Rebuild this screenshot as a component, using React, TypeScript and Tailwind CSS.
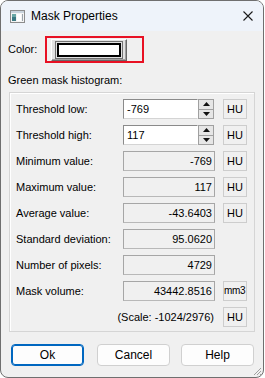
import React from "react";

const font = { fontFamily: '"Liberation Sans", Arial, sans-serif' };

const Spinner: React.FC = () => (
  <div className="flex h-[20px] w-[16px] flex-col border border-[#a0a0a0] bg-[#e6e6e6]">
    <div className="flex flex-1 items-center justify-center border-b border-[#a0a0a0]">
      <svg width="7" height="4" viewBox="0 0 7 4">
        <path d="M3.5 0 L7 4 L0 4 Z" fill="#111" />
      </svg>
    </div>
    <div className="flex flex-1 items-center justify-center">
      <svg width="7" height="4" viewBox="0 0 7 4">
        <path d="M0 0 L7 0 L3.5 4 Z" fill="#111" />
      </svg>
    </div>
  </div>
);

const Unit: React.FC<{ text: string; tight?: boolean }> = ({ text, tight }) => (
  <div
    className={`ml-[8px] flex h-[20px] w-[24px] items-center overflow-visible whitespace-nowrap border border-[#cdcdcd] bg-[#f0f0f0] leading-none text-black ${
      tight ? "pl-0 text-[10px] tracking-[-0.3px]" : "pl-[3px] text-[11px]"
    }`}
  >
    {text}
  </div>
);

const ValueBox: React.FC<{ value: string }> = ({ value }) => (
  <div className="flex h-[20px] w-[92px] items-center justify-end border border-[#a6a6a6] border-b-[#b8b8b8] bg-[#f0f0f0] pr-[2px] text-[11px] text-black">
    {value}
  </div>
);

const SpinInput: React.FC<{ value: string }> = ({ value }) => (
  <div className="flex w-[92px]">
    <div className="flex h-[20px] w-[75px] items-center border border-[#8a8a8a] border-b-[#d4d4d4] border-r-white bg-white pl-[3px] text-[11px] text-black">
      {value}
    </div>
    <Spinner />
  </div>
);

const Row: React.FC<{ label: string; children: React.ReactNode; unit?: string }> = ({ label, children, unit }) => (
  <div className="flex h-[20px] items-center">
    <div className="w-[107px] text-[11px] text-black">{label}</div>
    {children}
    {unit && <Unit text={unit} tight={unit === "mm3"} />}
  </div>
);

const Btn: React.FC<{ label: string; primary?: boolean }> = ({ label, primary }) => (
  <div
    className={`flex h-[22px] w-[73px] items-center justify-center rounded-[4px] bg-[#fdfdfd] text-[12px] text-black ${
      primary ? "border border-[#0067c0] shadow-[inset_0_0_0_1px_#0067c0]" : "border border-[#d0d0d0]"
    }`}
  >
    {label}
  </div>
);

export default function App() {
  return (
    <div className="h-[378px] w-[265px] overflow-hidden bg-white" style={font}>
      <div className="flex h-[378px] w-[264px] flex-col overflow-hidden rounded-[8px] border border-[#6f6f6f] bg-[#f0f0f0]">
        {/* Title bar */}
        <div className="flex h-[30px] items-center bg-[#eef3fa]">
          <svg className="ml-[9px]" width="15" height="13" viewBox="0 0 15 13">
            <rect x="0.5" y="0.5" width="14" height="12" fill="#f4f4f4" stroke="#8c8c8c" />
            <rect x="1" y="1" width="13" height="2" fill="#c9d3dc" />
            <rect x="2" y="4" width="4" height="7" fill="#3c7a83" />
            <rect x="2" y="4" width="4" height="3" fill="#6aa7a5" />
            <rect x="7" y="4" width="4" height="7" fill="#ffffff" />
            <rect x="12" y="4" width="1" height="7" fill="#9aa3aa" />
          </svg>
          <span className="ml-[6px] text-[12px] text-black">Mask Properties</span>
          <svg className="ml-auto mr-[10px]" width="10" height="10" viewBox="0 0 10 10">
            <path d="M0.5 0.5 L9.5 9.5 M9.5 0.5 L0.5 9.5" stroke="#1a1a1a" strokeWidth="1.1" />
          </svg>
        </div>

        {/* Color */}
        <div className="mt-[5px] flex h-[27px] items-center">
          <span className="ml-[7px] w-[37px] text-[11px] text-black">Color:</span>
          <div className="flex h-[27px] w-[99px] items-center border-2 border-[#e81123] pl-[4px]">
            <div className="flex h-[22px] w-[76px] items-center border border-white border-b-[#696969] border-r-[#696969] bg-[#e1e1e1] pl-[3px] shadow-[inset_-1px_-1px_0_#a0a0a0]">
              {/* colour swatch with focus rectangle */}
              <svg width="68" height="18" viewBox="0 0 68 18">
                <rect x="0.5" y="0.5" width="67" height="17" fill="none" stroke="#000" strokeDasharray="1 1" />
                <rect x="2" y="2" width="64" height="14" fill="#000" />
                <rect x="4" y="4" width="60" height="10" fill="#fff" />
              </svg>
            </div>
          </div>
        </div>

        <div className="ml-[7px] mt-[10px] h-[14px] text-[11px] leading-[14px] text-black">Green mask histogram:</div>

        {/* Group box */}
        <div className="ml-[8px] mt-[5px] flex h-[240px] w-[246px] flex-col gap-[6px] border border-[#d5d5d5] pl-[6px] pt-[6px] shadow-[inset_1px_1px_0_#ffffff]">
          <Row label="Threshold low:" unit="HU">
            <SpinInput value="-769" />
          </Row>
          <Row label="Threshold high:" unit="HU">
            <SpinInput value="117" />
          </Row>
          <Row label="Minimum value:" unit="HU">
            <ValueBox value="-769" />
          </Row>
          <Row label="Maximum value:" unit="HU">
            <ValueBox value="117" />
          </Row>
          <Row label="Average value:" unit="HU">
            <ValueBox value="-43.6403" />
          </Row>
          <Row label="Standard deviation:">
            <ValueBox value="95.0620" />
          </Row>
          <Row label="Number of pixels:">
            <ValueBox value="4729" />
          </Row>
          <Row label="Mask volume:" unit="mm3">
            <ValueBox value="43442.8516" />
          </Row>
          <div className="flex h-[20px] items-center">
            <div className="w-[199px] pr-[1px] text-right text-[11px] text-black">(Scale: -1024/2976)</div>
            <Unit text="HU" />
          </div>
        </div>

        {/* Buttons */}
        <div className="ml-[10px] mt-[12px] flex gap-[13px]">
          <Btn label="Ok" primary />
          <Btn label="Cancel" />
          <div className="ml-[-2px]">
            <Btn label="Help" />
          </div>
        </div>

        <div className="mt-auto flex justify-end pb-[1px] pr-[1px]">
          <svg width="9" height="9" viewBox="0 0 9 9">
            <path d="M8 1 L1 8 M8 4 L4 8 M8 7 L7 8" stroke="#a0a0a0" strokeWidth="1" />
          </svg>
        </div>
      </div>
    </div>
  );
}
